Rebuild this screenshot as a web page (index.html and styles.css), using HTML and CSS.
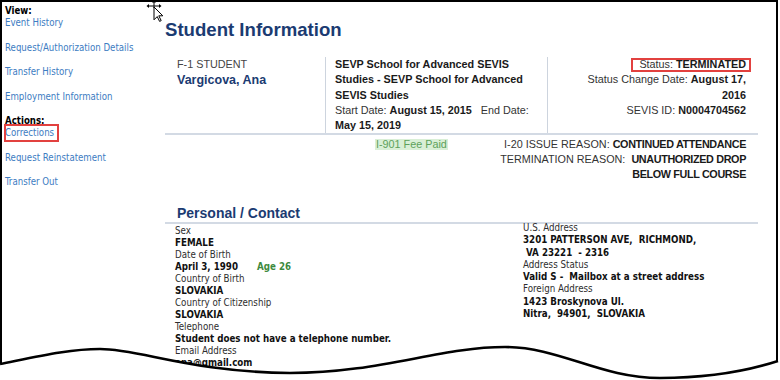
FILE: index.html
```html
<!DOCTYPE html>
<html>
<head>
<meta charset="utf-8">
<link rel="stylesheet" href="styles.css">
</head>
<body>
<div class="shot">
  <aside class="side">
    <div class="side-head">View:</div>
    <a class="side-link">Event History</a>
    <a class="side-link">Request/Authorization Details</a>
    <a class="side-link">Transfer History</a>
    <a class="side-link">Employment Information</a>
    <div class="side-head side-head--actions">Actions:</div>
    <a class="side-link side-link--marked">Corrections</a>
    <a class="side-link">Request Reinstatement</a>
    <a class="side-link">Transfer Out</a>
  </aside>
  <main class="main">
    <h1 class="title">Student Information</h1>
    <div class="summary">
      <div class="col col-name">
        <div class="type">F-1 STUDENT</div>
        <div class="name">Vargicova, Ana</div>
      </div>
      <div class="col col-school">
        <div class="school">SEVP School for Advanced SEVIS<br>Studies - SEVP School for Advanced<br>SEVIS Studies</div>
        <div>Start Date: <b>August 15, 2015</b>&nbsp;&nbsp; End Date:<br><b>May 15, 2019</b></div>
      </div>
      <div class="col col-status">
        <div><span class="status-mark">Status: <b>TERMINATED</b></span></div>
        <div>Status Change Date: <b>August 17,<br>2016</b></div>
        <div>SEVIS ID: <b>N0004704562</b></div>
      </div>
    </div>
    <div class="reasons-row">
      <span class="fee">I-901 Fee Paid</span>
      <div class="reasons">
        <div>I-20 ISSUE REASON: <b>CONTINUED ATTENDANCE</b></div>
        <div>TERMINATION REASON:&nbsp; <b>UNAUTHORIZED DROP<br>BELOW FULL COURSE</b></div>
      </div>
    </div>
    <h2 class="section">Personal / Contact</h2>
    <div class="personal">
      <div class="pcol pcol-left">
        <div class="lbl">Sex</div>
        <div class="val">FEMALE</div>
        <div class="lbl">Date of Birth</div>
        <div class="val">April 3, 1990 <span class="age">Age 26</span></div>
        <div class="lbl">Country of Birth</div>
        <div class="val">SLOVAKIA</div>
        <div class="lbl">Country of Citizenship</div>
        <div class="val">SLOVAKIA</div>
        <div class="lbl">Telephone</div>
        <div class="val">Student does not have a telephone number.</div>
        <div class="lbl">Email Address</div>
        <div class="val">ana@gmail.com</div>
      </div>
      <div class="pcol pcol-right">
        <div class="lbl">U.S. Address</div>
        <div class="val">3201 PATTERSON AVE,&nbsp; RICHMOND,<br>&nbsp;VA 23221&nbsp; - 2316</div>
        <div class="lbl">Address Status</div>
        <div class="val">Valid S -&nbsp; Mailbox at a street address</div>
        <div class="lbl">Foreign Address</div>
        <div class="val">1423 Broskynova Ul.</div>
        <div class="val">Nitra,&nbsp; 94901,&nbsp; SLOVAKIA</div>
      </div>
    </div>
  </main>
</div>
<svg class="cursor" width="20" height="24" viewBox="0 0 20 24">
  <g stroke="#000" stroke-width="1" fill="none">
    <line x1="3" y1="6" x2="15" y2="6"/>
    <line x1="9" y1="0.5" x2="9" y2="8"/>
  </g>
  <g fill="#000">
    <polygon points="1.5,6 4,4 4,8"/>
    <polygon points="16.5,6 14,4 14,8"/>
    <polygon points="9,0 7,2.5 11,2.5"/>
  </g>
  <polygon points="9,7 9,19.8 12.2,16.6 14.6,21.4 16.2,20.6 13.8,15.8 17.8,15.8" fill="#fff" stroke="#000" stroke-width="1" stroke-linejoin="round"/>
</svg>
<svg class="tear" width="780" height="60" viewBox="0 0 780 60">
  <path d="M0,44 C40,36 70,29 100,29 C140,29 190,52 290,53 C380,53 440,27 505,27 C560,27 600,58 660,58 C710,58 750,50 778,41 L780,41 L780,60 L0,60 Z" fill="#fff"/>
  <path d="M0,44 C40,36 70,29 100,29 C140,29 190,52 290,53 C380,53 440,27 505,27 C560,27 600,58 660,58 C710,58 750,50 778,41" fill="none" stroke="#000" stroke-width="2.6"/>
</svg>
</body>
</html>
```

FILE: styles.css
```css
* { box-sizing: border-box; }

html, body {
  margin: 0;
  background: #fff;
}

body {
  position: relative;
  width: 780px;
  height: 380px;
  overflow: hidden;
  font-family: "Liberation Sans", Arial, sans-serif;
}

.shot {
  width: 778px;
  height: 380px;
  border-top: 2px solid #000;
  border-left: 2px solid #000;
  border-right: 2px solid #000;
  display: flex;
  overflow: hidden;
}

/* sidebar */
.side {
  width: 158px;
  flex: none;
  padding: 3px 0 0 3px;
  font-family: "DejaVu Sans Condensed", "DejaVu Sans", sans-serif;
  font-size: 9.6px;
  line-height: 12px;
}

.side-head {
  font-weight: bold;
  color: #000;
}

.side-head--actions { margin-top: 1px; }

.side-link {
  display: block;
  color: #3d7cc2;
  margin-bottom: 12.5px;
  text-decoration: none;
}

.side-link--marked {
  position: relative;
  width: fit-content;
}

.side-link--marked::after {
  content: "";
  position: absolute;
  left: -1px;
  right: -5px;
  top: -3px;
  bottom: -3px;
  border: 2px solid #e2413f;
}

/* main */
.main {
  flex: 1;
  min-width: 0;
}

.title {
  margin: 17px 0 0 5px;
  font-size: 18.6px;
  line-height: 22px;
  font-weight: bold;
  color: #1b3b72;
}

.summary {
  display: flex;
  margin: 16px 0 0 5px;
  width: 593px;
  border-bottom: 2px solid #d3dae4;
  font-size: 10.8px;
  line-height: 15.3px;
  color: #333;
}

.summary b { color: #1a1a1a; }

.col-name {
  width: 160px;
  flex: none;
  padding-left: 12px;
}

.type { color: #444; }

.name {
  font-size: 12.5px;
  line-height: 17.4px;
  font-weight: bold;
  color: #1b3b72;
}

.col-school {
  width: 222px;
  flex: none;
  padding: 0 6px 0 9px;
  border-left: 1.5px solid #cdd4de;
  white-space: nowrap;
}

.school {
  font-weight: bold;
  color: #1a1a1a;
}

.col-status {
  flex: 1;
  padding-right: 12px;
  text-align: right;
  border-left: 1.5px solid #cdd4de;
  white-space: nowrap;
}

.status-mark {
  position: relative;
  display: inline-block;
}

.status-mark::after {
  content: "";
  position: absolute;
  left: -8px;
  right: -5px;
  top: 1px;
  bottom: 0;
  border: 2px solid #e2413f;
}

.reasons-row {
  display: flex;
  justify-content: space-between;
  align-items: flex-start;
  margin-left: 5px;
  width: 593px;
  padding: 1.5px 12px 0 210px;
  font-size: 10.8px;
  line-height: 15px;
  color: #333;
}

.reasons-row b {
  color: #1a1a1a;
  letter-spacing: -0.35px;
}

.fee {
  display: inline-block;
  margin-top: 2px;
  padding: 0 1px;
  line-height: 11px;
  background: #d9efd6;
  color: #5da15a;
}

.reasons {
  text-align: right;
  white-space: nowrap;
}

.section {
  margin: 22px 0 0 5px;
  width: 593px;
  padding-left: 12px;
  font-size: 14px;
  line-height: 18px;
  font-weight: bold;
  color: #1b3b72;
  border-bottom: 2px solid #d3dae4;
}

.personal {
  display: grid;
  grid-template-columns: 348px 1fr;
  margin-left: 5px;
  padding-left: 10px;
  font-family: "DejaVu Sans Condensed", "DejaVu Sans", sans-serif;
  font-size: 9.7px;
  line-height: 12px;
  white-space: nowrap;
}

.pcol-left { padding-top: 1px; }

.pcol-right {
  margin-top: -2px;
  line-height: 12.3px;
}

.lbl { color: #2e2e2e; }

.val {
  font-weight: bold;
  color: #111;
}

.age {
  margin-left: 16px;
  color: #3e8a3e;
}

/* overlays */
.cursor {
  position: absolute;
  left: 145px;
  top: 0;
}

.tear {
  position: absolute;
  left: 0;
  top: 320px;
}
```
